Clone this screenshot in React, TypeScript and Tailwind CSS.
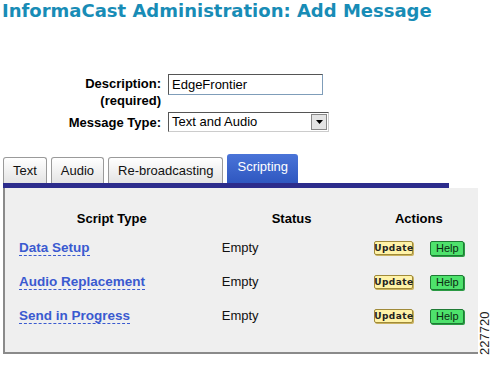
const rows = ['Data Setup', 'Audio Replacement', 'Send in Progress'];

const tabs = ['Text', 'Audio', 'Re-broadcasting'];

function UpdateButton() {
  return (
    <span className="flex h-[14px] w-[39px] items-center justify-center rounded-[2px] border border-[#a08a3a] bg-[#fff3a8] text-[9px] font-bold leading-none tracking-[0.4px] text-[#222] shadow-[1px_1px_0_#c9b260] [font-family:'DejaVu_Sans',Verdana,sans-serif]">
      Update
    </span>
  );
}

function HelpButton() {
  return (
    <span className="flex h-[15px] w-[34px] items-center justify-center rounded-[2px] border border-[#1f7a35] bg-[#4ee26c] text-[11px] leading-none text-[#0b2a12] shadow-[1px_1px_0_#2a9a44] [font-family:'Liberation_Sans',Arial,sans-serif]">
      Help
    </span>
  );
}

export default function App() {
  return (
    <div className="relative h-[365px] w-[492px] overflow-hidden bg-white text-black [font-family:'Liberation_Sans',Arial,sans-serif]">
      <h1 className="pl-[2px] pt-[1px] text-[18px] font-bold leading-[20px] text-[#188cb6] [font-family:'DejaVu_Sans',Verdana,sans-serif]">
        InformaCast Administration: Add Message
      </h1>

      <div className="mt-[54px] flex flex-col gap-[2px]">
        <div className="flex">
          <div className="w-[161px] text-right text-[13px] font-bold leading-[17px]">
            Description:
            <br />
            (required)
          </div>
          <div className="ml-[7px] mt-[-1px] h-[21px] w-[155px] border border-[#7f9db9] border-t-[#555] border-l-[#555] bg-white pl-[3px] text-[13px] leading-[19px]">
            EdgeFrontier
          </div>
        </div>
        <div className="mt-[1px] flex items-center">
          <div className="w-[161px] text-right text-[13px] font-bold leading-[17px]">Message Type:</div>
          <div className="ml-[7px] flex h-[20px] w-[161px] items-center justify-between border border-[#555] border-b-[#ccc] border-r-[#ccc] bg-white pl-[3px] pr-[1px] text-[13px]">
            <span>Text and Audio</span>
            <span className="flex h-[16px] w-[16px] items-center justify-center border border-[#888] bg-[#e4e4e4]">
              <svg width="7" height="4" viewBox="0 0 7 4">
                <path d="M0 0h7L3.5 4z" fill="#000" />
              </svg>
            </span>
          </div>
        </div>
      </div>

      <div className="ml-[3px] mt-[22px] w-[475px]">
        <div className="flex items-end gap-[4px]">
          {tabs.map((t) => (
            <div
              key={t}
              className="flex h-[26px] items-center rounded-t-[3px] border border-b-0 border-[#9a9a9a] bg-gradient-to-b from-[#ffffff] to-[#e4e4e4] px-[9px] text-[13px] text-[#111]"
            >
              {t}
            </div>
          ))}
          <div className="flex h-[29px] items-center rounded-t-[3px] bg-gradient-to-b from-[#4a74d8] to-[#2f57c0] px-[10px] pb-[3px] text-[13px] text-white">
            Scripting
          </div>
        </div>
        <div className="h-[5px] w-[446px] bg-[#2c2c8c]" />
        <div className="h-[166px] border-b-2 border-l-2 border-[#8a8a8a] bg-[#efefef]">
          <div className="flex pt-[23px] text-[13px] font-bold leading-[16px]">
            <div className="ml-[14px] w-[188px] text-center">Script Type</div>
            <div className="ml-[19px] w-[138px] text-center">Status</div>
            <div className="w-[120px] text-center">Actions</div>
          </div>
          <div className="mt-[13px] flex flex-col gap-[18px]">
            {rows.map((r) => (
              <div key={r} className="flex h-[16px] items-center text-[13px]">
                <div className="ml-[14px] w-[188px]">
                  <span className="border-b border-dashed border-[#3a5ad0] text-[13.5px] font-bold leading-[15px] text-[#3a5ad0]">
                    {r}
                  </span>
                </div>
                <div className="ml-[19px] w-[138px] text-[#111]">Empty</div>
                <div className="ml-[4px] flex w-[120px] items-center justify-center gap-[17px]">
                  <UpdateButton />
                  <HelpButton />
                </div>
              </div>
            ))}
          </div>
        </div>
      </div>

      <div className="absolute left-[478px] top-[305px] origin-top-left translate-y-[50px] -rotate-90 text-[13px] leading-[13px] text-[#222]">
        227720
      </div>
    </div>
  );
}
